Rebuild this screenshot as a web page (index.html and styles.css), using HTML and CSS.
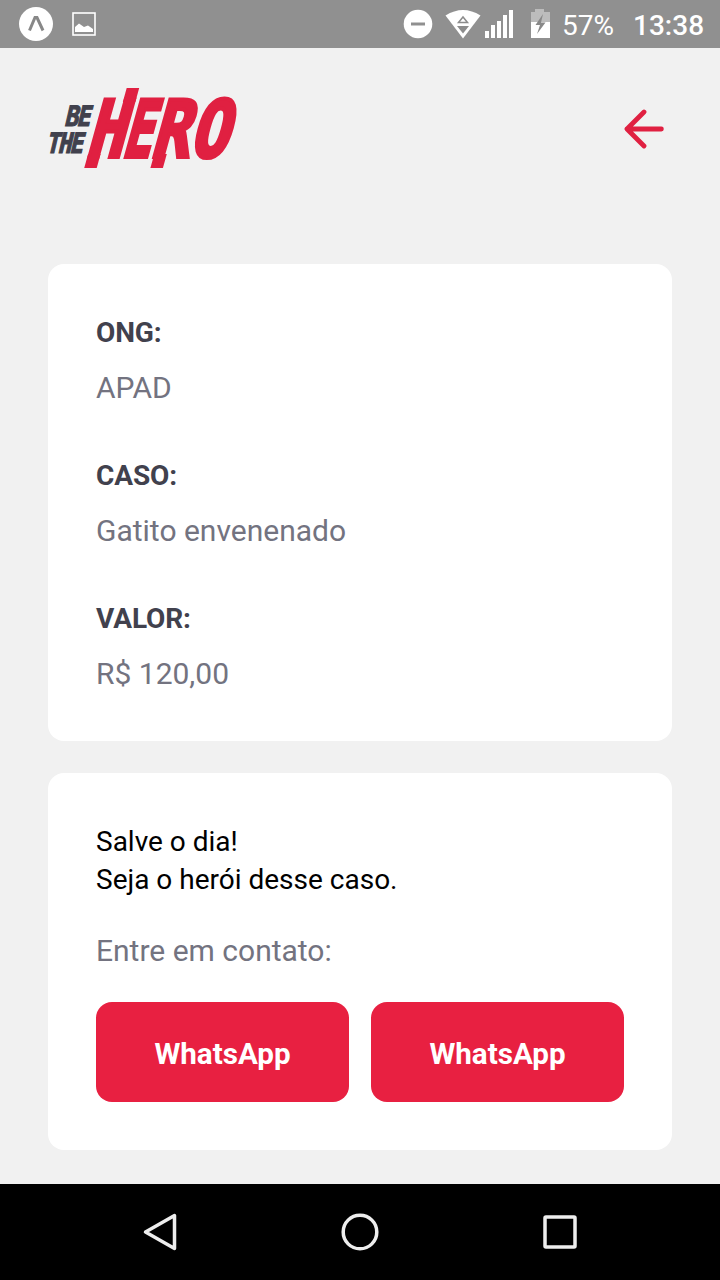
FILE: index.html
```html
<!DOCTYPE html>
<html lang="pt-BR">
<head>
<meta charset="utf-8">
<title>Be The Hero</title>
<link rel="stylesheet" href="styles.css">
</head>
<body>
<div class="status-bar">
  <svg class="status-left" width="120" height="48" viewBox="0 0 120 48">
    <circle cx="36" cy="24" r="17" fill="#fff"/>
    <path d="M29.500 30.500L35 17.500H37L43 30.500" fill="none" stroke="#888" stroke-width="3"/>
    <rect x="73" y="13" width="22" height="22" fill="none" stroke="#fff" stroke-width="1.600"/>
    <path d="M75 32V27L79 23.500L84 27L88 25.500L93 29V32Z" fill="#fff"/>
  </svg>
  <svg class="status-icons" width="165" height="48" viewBox="395 0 165 48">
    <circle cx="418" cy="24" r="14.300" fill="#fff"/>
    <path d="M411 24H425" stroke="#909090" stroke-width="3"/>
    <path d="M445.500 15.500Q463 4.500 480.500 15.500L463 38.500Z" fill="#fff"/>
    <path d="M458.500 22.500L463 17L467.500 22.500Z" fill="none" stroke="#8c8c8c" stroke-width="1.500"/>
    <path d="M457 26H469L463 33.500Z" fill="#8c8c8c"/>
    <path d="M485 31h4v7h-4zM491 25h4v13h-4zM497 21h4v17h-4zM503 15h4v23h-4zM509 10h4v28h-4z" fill="#fff"/>
    <path d="M531 12h4V9h9v3h6v10h-19z" fill="#bcbcbc"/>
    <path d="M531 22h19v16h-19z" fill="#fff"/>
    <path d="M543 14L535.500 25H540L537 34L545.500 22.500H541Z" fill="#888"/>
  </svg>
  <span class="battery">57%</span>
  <span class="clock">13:38</span>
</div>
<main class="screen">
  <header class="header">
    <svg class="logo" width="190" height="80" viewBox="48 88 190 80" role="img" aria-label="Be The Hero">
      <g class="logo-small">
        <text transform="translate(64 125.500) skewX(-13) scale(.82 1)">BE</text>
        <text transform="translate(45.500 152.500) skewX(-13) scale(.8 1)">THE</text>
      </g>
      <g class="logo-big">
        <text transform="translate(84.800 157) skewX(-15.500) scale(.8 1)">H</text>
        <text transform="translate(121 157) skewX(-15.500) scale(.62 1)">E</text>
        <text transform="translate(149.800 157) skewX(-15.500) scale(.8 1)">R</text>
        <text transform="translate(188.500 157) skewX(-15.500) scale(.81 1)">O</text>
      </g>
      <g class="logo-bars">
        <rect width="12.500" height="14" transform="translate(88.100 154) skewX(-15.500)"/>
        <rect width="12.500" height="14" transform="translate(126.700 88) skewX(-15.500)"/>
        <rect width="12.500" height="14" transform="translate(154.300 154) skewX(-15.500)"/>
      </g>
    </svg>
    <svg class="back" width="48" height="48" viewBox="0 0 24 24"><path d="M18.700 12H1.500M10 3.500L1.500 12L10 20.500"/></svg>
  </header>
  <section class="card incident">
    <h2>ONG:</h2><p>APAD</p>
    <h2>CASO:</h2><p>Gatito envenenado</p>
    <h2>VALOR:</h2><p>R$ 120,00</p>
  </section>
  <section class="card contact">
    <div class="hero-title">Salve o dia!<br>Seja o herói desse caso.</div>
    <p>Entre em contato:</p>
    <div class="actions"><button>WhatsApp</button><button>WhatsApp</button></div>
  </section>
</main>
<nav class="nav-bar">
  <svg width="720" height="96" viewBox="0 1184 720 96">
    <path d="M174.500 1215.500V1248.500L145.500 1232Z"/>
    <circle cx="360" cy="1232" r="16.800"/>
    <rect x="545" y="1217" width="30" height="30" rx="1"/>
  </svg>
</nav>
</body>
</html>
```
FILE: styles.css
```css
* { box-sizing: border-box; }
body { margin: 0; width: 720px; height: 1280px; display: flex; flex-direction: column; background: #f1f1f1; font-family: Roboto, sans-serif; overflow: hidden; }
svg { display: block; flex: none; }
.status-bar { height: 48px; flex: none; display: flex; align-items: center; background: #909090; color: #fff; white-space: nowrap; }
.status-icons { margin-left: 275px; }
.battery { width: 73px; padding: 3px 0 0 2px; font-size: 28px; line-height: 34px; }
.clock { padding-top: 3px; font-size: 28px; line-height: 34px; font-weight: 500; }
.screen { flex: 1; padding: 40px 48px 0; }
.header { height: 80px; display: flex; justify-content: space-between; align-items: center; margin-bottom: 96px; }
.logo { overflow: visible; font-family: "DejaVu Sans Mono", monospace; font-weight: 700; }
.logo-small { font-size: 28px; fill: #41414d; stroke: #41414d; stroke-width: 1.2px; letter-spacing: -2px; }
.logo-big { font-size: 79px; fill: #e02041; stroke: #e02041; stroke-width: 4px; stroke-linejoin: miter; }
.logo-bars { fill: #e02041; }
.back { margin: 1px 0 0; }
.back path { fill: none; stroke: #e02041; stroke-width: 2.4; stroke-linecap: round; stroke-linejoin: round; }
.card { background: #fff; border-radius: 16px; padding: 49px 48px 48px; }
.incident { height: 477px; margin-bottom: 32px; }
.card h2 { margin: 0; font-size: 28px; line-height: 39px; font-weight: 700; color: #41414d; letter-spacing: -.1px; }
.card p { margin: 0; font-size: 30px; line-height: 40px; color: #737380; }
.incident p { margin: 16px 0 48px; }
.contact { height: 377px; padding-top: 50px; }
.hero-title { font-size: 28px; line-height: 38px; color: #000; }
.contact p { margin-top: 32px; }
.actions { display: flex; gap: 22px; margin-top: 31px; }
button { flex: 1; height: 100px; padding: 3px 0 0; border: 0; border-radius: 16px; background: #e82041; color: #fff; font: 700 29.6px Roboto, sans-serif; }
.nav-bar { height: 96px; flex: none; background: #000; }
.nav-bar path, .nav-bar circle, .nav-bar rect { fill: none; stroke: #eee; stroke-width: 3.500; stroke-linejoin: round; }
```
